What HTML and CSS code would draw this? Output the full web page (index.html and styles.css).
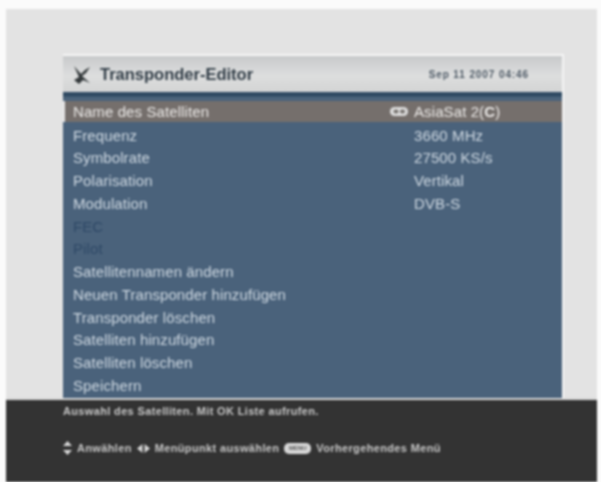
FILE: index.html
```html
<!DOCTYPE html>
<html lang="de">
<head>
    <meta charset="UTF-8">
    <meta name="viewport" content="width=device-width, initial-scale=1.0">
    <title>Transponder-Editor</title>
    <link rel="stylesheet" href="styles.css">
</head>
<body>
    <div class="screen">
        <div class="stage">
            <div class="panel">
                <div class="panel-head">
                    <svg class="dish" width="20" height="21" viewBox="0 0 20 21">
                        <path d="M2 2 L9 10 L13 6 L18 3 L14 9 L10 12 L18 19 L11 16 L7 20 L2 16 L7 13 Z" fill="#33383a"/>
                    </svg>
                    <span class="panel-title">Transponder-Editor</span>
                    <span class="panel-date">Sep 11 2007 04:46</span>
                </div>
                <div class="panel-rule"></div>
                <ul class="menu">
                    <li class="row row-active"><span>Name des Satelliten</span>
                        <span class="row-value">
                            <svg class="tag" width="18" height="9" viewBox="0 0 18 9">
                                <rect width="18" height="9" rx="4.5" fill="#dedede"/>
                                <rect x="3.5" y="2.5" width="5" height="4" rx="2" fill="#77736f"/>
                                <rect x="10" y="2.5" width="5" height="4" rx="2" fill="#77736f"/>
                            </svg>
                            <span class="value-text">AsiaSat 2(<b>C</b>)</span>
                        </span></li>
                    <li class="row"><span>Frequenz</span><span class="row-value"><span class="value-text">3660 MHz</span></span></li>
                    <li class="row"><span>Symbolrate</span><span class="row-value"><span class="value-text">27500 KS/s</span></span></li>
                    <li class="row"><span>Polarisation</span><span class="row-value"><span class="value-text">Vertikal</span></span></li>
                    <li class="row"><span>Modulation</span><span class="row-value"><span class="value-text">DVB-S</span></span></li>
                    <li class="row row-off"><span>FEC</span></li>
                    <li class="row row-off"><span>Pilot</span></li>
                    <li class="row"><span>Satellitennamen ändern</span></li>
                    <li class="row"><span>Neuen Transponder hinzufügen</span></li>
                    <li class="row"><span>Transponder löschen</span></li>
                    <li class="row"><span>Satelliten hinzufügen</span></li>
                    <li class="row"><span>Satelliten löschen</span></li>
                    <li class="row"><span>Speichern</span></li>
                </ul>
            </div>
        </div>
        <div class="help">
            <p class="help-line">Auswahl des Satelliten. Mit OK Liste aufrufen.</p>
            <p class="help-keys">
                <svg width="9" height="14" viewBox="0 0 9 14"><path d="M4.5 0 L9 5 H0 Z M0 9 H9 L4.5 14 Z" fill="#d8d8d8"/></svg>
                <span>Anwählen</span>
                <svg width="13" height="9" viewBox="0 0 13 9"><path d="M5.5 0 V9 L0 4.5 Z M7.5 0 L13 4.5 L7.5 9 Z" fill="#d8d8d8"/></svg>
                <span>Menüpunkt auswählen</span>
                <i class="key">MENU</i>
                <span>Vorhergehendes Menü</span>
            </p>
        </div>
    </div>
</body>
</html>
```

FILE: styles.css
```css
html, body {
    margin: 0;
    height: 100%;
    background-color: #fbfbfb;
}
body {
    padding: 9px 4px 0 6px;
    box-sizing: border-box;
    overflow: hidden;
    font-family: "Liberation Sans", Arial, sans-serif;
}
.screen {
    position: relative;
    height: 473px;
    display: flex;
    flex-direction: column;
    background-color: #e3e3e3;
    filter: blur(0.8px);
}
.stage {
    height: 389px;
    padding: 45px 33px 0 57px;
    box-sizing: border-box;
}
.panel {
    height: 344px;
    display: flex;
    flex-direction: column;
    border-top: 2px solid #f6f6f6;
    border-right: 2px solid #f4f4f4;
    box-sizing: border-box;
    background-color: #4a627b;
}
.panel-head {
    height: 36px;
    flex: none;
    display: flex;
    align-items: center;
    padding: 0 12px 0 9px;
    background: linear-gradient(#c8cacb, #dddede 55%, #d3d4d4);
    color: #2e3a44;
}
.dish {
    flex: none;
    margin-right: 8px;
}
.panel-title {
    font-size: 16.5px;
    font-weight: bold;
}
.panel-date {
    margin-left: auto;
    margin-right: 21px;
    font-size: 10px;
    font-weight: bold;
    letter-spacing: 0.9px;
    color: #4e5a66;
}
.panel-rule {
    height: 6px;
    flex: none;
    background: linear-gradient(#2f4a63 70%, #5e7488);
}
.menu {
    list-style: none;
    margin: 3px 0 0;
    padding: 0;
}
.row {
    height: 22.75px;
    display: flex;
    align-items: center;
    padding-left: 10px;
    font-size: 15px;
    letter-spacing: 0.1px;
    color: #cfd9e2;
}
.row-active {
    height: 21px;
    margin-bottom: 1.75px;
    background-color: #756f6c;
    border-left: 2px solid #e6e6e6;
    padding-left: 8px;
    color: #eceae8;
}
.row-off {
    color: #2e4866;
}
.row-value {
    position: absolute;
    left: 408px;
}
.value-text {
    display: block;
}
.tag {
    position: absolute;
    left: -24px;
    top: 4px;
}
.help {
    flex: 1;
    padding: 0 0 0 57px;
    border-top: 2px solid #d8d8d8;
    background-color: #333333;
    color: #c8c8c8;
    font-size: 11px;
    font-weight: bold;
    letter-spacing: 0.35px;
}
.help-line {
    margin: 5px 0 0;
}
.help-keys {
    margin: 24px 0 0;
    display: flex;
    align-items: center;
    gap: 5px;
}
.key {
    width: 27px;
    height: 11px;
    border-radius: 5px;
    background-color: #d8d8d8;
    color: #555555;
    font-size: 6px;
    font-style: normal;
    line-height: 11px;
    letter-spacing: 0;
    text-align: center;
}
```
